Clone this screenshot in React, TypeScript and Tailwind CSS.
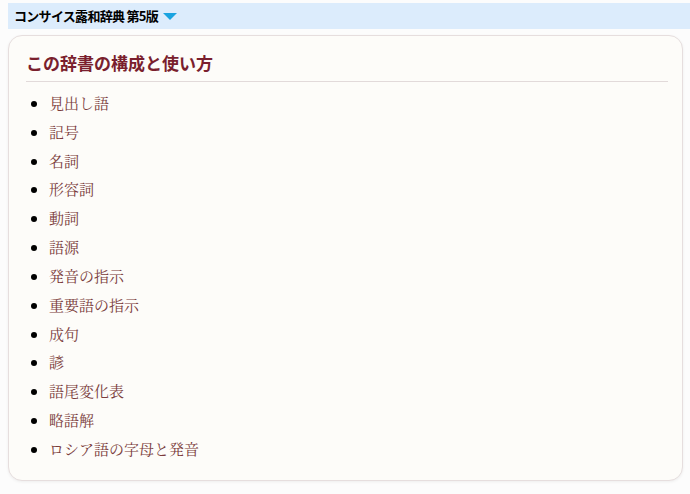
const items = [
  '見出し語',
  '記号',
  '名詞',
  '形容詞',
  '動詞',
  '語源',
  '発音の指示',
  '重要語の指示',
  '成句',
  '諺',
  '語尾変化表',
  '略語解',
  'ロシア語の字母と発音',
]

export default function App() {
  return (
    <div className="min-h-[494px] bg-[#fcfcfc] pt-[3px] font-['Noto_Sans_CJK_JP',sans-serif]">
      <div className="ml-2 flex h-[26px] items-center bg-[#dcecfc] pl-[6px]">
        <span className="text-[13px] font-bold tracking-[-0.7px] text-black">コンサイス露和辞典 第5版</span>
        <svg width="14" height="8" viewBox="0 0 14 8" className="ml-[5px] mt-[2px]">
          <polygon points="0,0 14,0 7,7" fill="#1aa3e0" />
        </svg>
      </div>
      <div className="ml-2 mr-[7px] mt-[6px] h-[446px] rounded-[14px] border border-[#e6dede] bg-[#fdfcf9] pl-[17px] pr-[14px] pt-[14px] shadow-[0_1px_3px_rgba(0,0,0,0.06)]">
        <h1 className="border-b border-[#e2dada] pb-[5px] text-[17px] font-bold leading-[26px] text-[#7a1f2e]">
          この辞書の構成と使い方
        </h1>
        <ul className="mt-[7px] list-disc pl-[23px] font-['Noto_Serif_CJK_JP','Noto_Sans_CJK_JP',serif] text-[15px] leading-[28.83px] text-[#7b3c3c] marker:text-black">
          {items.map((t) => (
            <li key={t}>{t}</li>
          ))}
        </ul>
      </div>
    </div>
  )
}
